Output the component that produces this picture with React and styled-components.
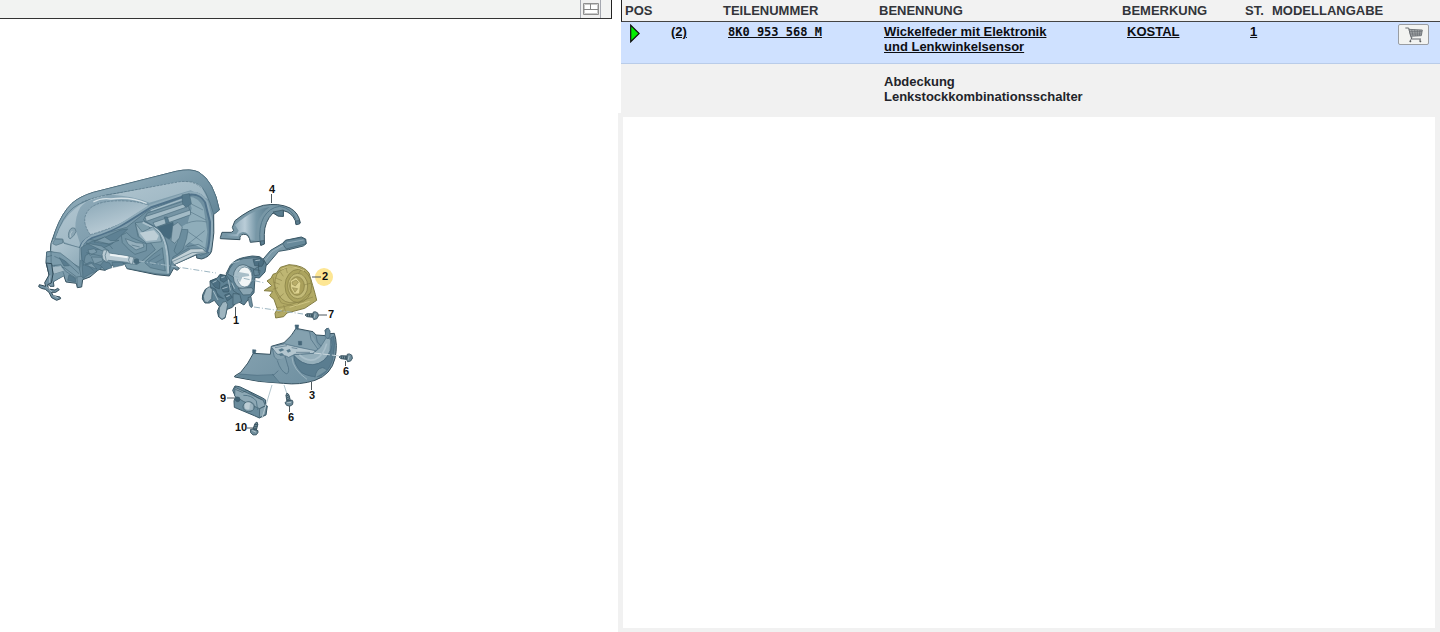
import React from 'react'
import styled, { createGlobalStyle } from 'styled-components'

const parts = [
  {
    pos: '(2)',
    number: '8K0 953 568 M',
    name: ['Wickelfeder mit Elektronik', 'und Lenkwinkelsensor'],
    remark: 'KOSTAL',
    count: '1',
    selected: true,
  },
  {
    name: ['Abdeckung', 'Lenkstockkombinationsschalter'],
  },
]

const labels = [
  { text: '4', x: 269, y: 193 },
  { text: '2', x: 322, y: 280 },
  { text: '7', x: 328, y: 318 },
  { text: '1', x: 233, y: 324 },
  { text: '6', x: 343, y: 375 },
  { text: '3', x: 309, y: 399 },
  { text: '9', x: 220, y: 402 },
  { text: '6', x: 288, y: 421 },
  { text: '10', x: 235, y: 431 },
]

function App() {
  return (
    <>
      <GlobalStyle />
      <Page>
        <DrawingPanel>
          <Toolbar>
            <LayoutButton type="button" aria-label="Layout">
              <LayoutIcon />
            </LayoutButton>
          </Toolbar>
          <DrawingArea>
            <Drawing />
          </DrawingArea>
        </DrawingPanel>

        <PartsPanel>
          <PartsTable>
            <colgroup>
              <Col $width="41px" />
              <Col $width="57px" />
              <Col $width="156px" />
              <Col $width="243px" />
              <Col $width="123px" />
              <Col $width="27px" />
              <Col />
              <Col $width="60px" />
            </colgroup>
            <thead>
              <tr>
                <HeadCell colSpan={2}>POS</HeadCell>
                <HeadCell>TEILENUMMER</HeadCell>
                <HeadCell>BENENNUNG</HeadCell>
                <HeadCell>BEMERKUNG</HeadCell>
                <HeadCell>ST.</HeadCell>
                <HeadCell colSpan={2}>MODELLANGABE</HeadCell>
              </tr>
            </thead>
            <tbody>
              {parts.map((part) => (
                <PartRow key={part.name[0]} part={part} />
              ))}
            </tbody>
          </PartsTable>
          <DetailFrame />
        </PartsPanel>
      </Page>
    </>
  )
}

function PartRow({ part }) {
  if (!part.selected) {
    return (
      <Row>
        <Cell colSpan={3} />
        <Cell>
          {part.name.map((line) => <Line key={line}>{line}</Line>)}
        </Cell>
        <Cell colSpan={4} />
      </Row>
    )
  }
  return (
    <Row $selected>
      <Cell><MarkerIcon /></Cell>
      <Cell><PartLink href="#pos">{part.pos}</PartLink></Cell>
      <Cell><NumberLink href="#number">{part.number}</NumberLink></Cell>
      <Cell>
        <PartLink href="#name">
          {part.name.map((line) => <Line key={line}>{line}</Line>)}
        </PartLink>
      </Cell>
      <Cell><PartLink href="#remark">{part.remark}</PartLink></Cell>
      <Cell><PartLink href="#count">{part.count}</PartLink></Cell>
      <Cell />
      <Cell $end>
        <CartButton type="button" aria-label="Warenkorb">
          <CartIcon />
        </CartButton>
      </Cell>
    </Row>
  )
}

function LayoutIcon() {
  return (
    <svg width="16" height="12" viewBox="0 0 16 12" fill="none">
      <path d="M.5 .5H15.500V11.500H.5Z" fill="#fff" stroke="#8f8f8f" />
      <path d="M1.500 1.500H14.500V10.500H1.500Z" stroke="#c9c9c9" />
      <path d="M1 6.500H15M7.500 1V6" stroke="#858585" />
    </svg>
  )
}

function MarkerIcon() {
  return (
    <Marker width="10" height="19" viewBox="0 0 10 19">
      <path d="M.7 1.200 9.200 9.500 .7 17.800Z" fill="#00f000" stroke="#111" strokeWidth="1.200" />
    </Marker>
  )
}

function CartIcon() {
  return (
    <svg width="18" height="16" viewBox="45 36 54 48" fill="none" stroke="#666b70">
      <path d="M46 39h10l9 33h28" strokeWidth="3" />
      <path d="M57 43l40 2-3 17-32 2Z" fill="#a5a9ab" strokeWidth="2.500" />
      <path d="M65 44l4 19M74 44l2 19M82 45v18M90 45l-2 17M58 50h38M60 57h35" strokeWidth="2" />
      <path d="M66 66l-5 12M90 72v6" strokeWidth="2.500" />
      <circle cx="61" cy="79" r="2.500" fill="#555" />
      <circle cx="91" cy="79" r="2.500" fill="#555" />
    </svg>
  )
}

function Drawing() {
  return (
    <DrawingSvg width="330" height="290" viewBox="36 160 330 290" role="img" aria-label="Lenkstockschalter">
      <defs>
        <linearGradient id="hood" x1="0" y1="0" x2="1" y2="1">
          <stop offset="0" stopColor="#a4bdca" />
          <stop offset=".5" stopColor="#7898a8" />
          <stop offset="1" stopColor="#567a8d" />
        </linearGradient>
        <linearGradient id="face" x1="0" y1="0" x2="1" y2="1">
          <stop offset="0" stopColor="#b7cad4" />
          <stop offset="1" stopColor="#8eabb9" />
        </linearGradient>
        <linearGradient id="glass" x1="0" y1="0" x2=".6" y2="1">
          <stop offset="0" stopColor="#8ba8b7" />
          <stop offset="1" stopColor="#c2d2db" />
        </linearGradient>
        <linearGradient id="steel" x1="0" y1="0" x2="1" y2="0">
          <stop offset="0" stopColor="#6f91a3" />
          <stop offset=".45" stopColor="#bacdd8" />
          <stop offset=".7" stopColor="#7798a8" />
          <stop offset="1" stopColor="#5b7c8e" />
        </linearGradient>
        <linearGradient id="shell" x1="0" y1="0" x2="1" y2="1">
          <stop offset="0" stopColor="#9ab4c2" />
          <stop offset="1" stopColor="#5f8294" />
        </linearGradient>
        <linearGradient id="panel" x1="0" y1="0" x2="1" y2=".6">
          <stop offset="0" stopColor="#88a4b2" />
          <stop offset="1" stopColor="#6f90a1" />
        </linearGradient>
      </defs>

      <Dashboard />
      <TopCover />
      <StalkSwitch />
      <ClockSpring />
      <LowerCover />
      <KneeSwitch />

      <g fill="none" stroke="#9db6c2" strokeWidth="1">
        <path d="M139 261 216 273M233 276 265 283M254 307 303 314" strokeDasharray="6 2 1 2" />
        <path d="M314 353 340 356" stroke="#c9d7dd" strokeDasharray="7 2" />
        <path d="M272 385 262 418M284 385 287 394" stroke="#b4c7cf" />
      </g>
      <Screw x={305} y={315} angle={4} />
      <Screw x={339} y={357} angle={5} />
      <Screw x={287} y={393} angle={78} />
      <Screw x={257} y={422} angle={107} />

      <circle cx="324" cy="277" r="9" fill="#fde694" />
      <path
        d="M271.500 194v9M312 277h9M318 315h9M235.500 307v9M345.500 361v5M311.500 382v8M227 398h7M289.500 406v6M247 428h6"
        stroke="#4d575c"
      />
      {labels.map((label) => (
        <PartLabel key={label.text + label.x} x={label.x} y={label.y}>{label.text}</PartLabel>
      ))}
    </DrawingSvg>
  )
}

function Dashboard() {
  return (
    <g transform="translate(30 160) scale(.33333)" stroke="#48697b" strokeWidth="1.800" strokeLinejoin="round">
      <path d="M63 250 76 213Q96 158 126 130 148 110 190 97L438 34Q483 24 507 37 552 64 568 150L551 163Q555 220 545 272 541 290 515 297L500 294 500 284 432 314 448 325 442 331 431 325 418 348 378 344 291 326 284 311 248 316 225 331 207 328 180 351 158 359 155 381 142 383 139 370 108 366 101 346 70 365 72 379 60 379 48 367 58 347 48 308 50 276 61 275Z" fill="url(#shell)" stroke="#36515f" strokeWidth="3" />
      {/* hood with its padded rim */}
      <path d="M76 235Q98 167 130 143 161 121 220 107L467 65Q510 64 527 98 542 129 551 163L568 150Q552 64 507 37 483 24 438 34L190 97Q148 110 126 130 96 158 76 213L65 250Z" fill="url(#hood)" />
      <path d="M76 236Q96 176 135 146 157 125 220 109L443 66Q492 59 514 80L533 117 482 91 358 128Q308 107 243 104 178 108 151 142 135 170 136 207L149 247 151 264Z" fill="url(#face)" stroke="none" />
      <path d="M155 127Q182 115 230 105L450 65Q490 61 512 82" fill="none" strokeDasharray="7 4" strokeWidth="1.500" />
      <path d="M181 224Q146 174 184 142 215 119 287 123 333 125 358 137 313 184 181 224Z" fill="url(#glass)" strokeWidth="1.500" strokeDasharray="8 3" />
      <path d="M190 126Q215 112 243 117 300 109 350 130" fill="none" stroke="#d5e1e6" strokeWidth="4" />
      <path d="M135 205Q121 199 116 219 113 237 122 236 134 226 138 215Z" fill="#8ba6b4" />
      <path d="M127 213Q118 222 122 232" fill="none" stroke="#bccfd7" strokeWidth="2" />
      {/* opening behind the instrument cluster */}
      <path d="M153 257Q155 244 188 230L290 202 351 154 475 103Q512 100 529 129L544 185Q546 249 534 278L512 286 475 265 429 291 416 337 378 334 293 315 279 306 231 319 185 331 160 354 148 344Z" fill="#6f90a1" />
      <path d="M150 285Q147 248 183 232 248 211 292 184L360 141 475 103Q510 95 527 125L541 183Q544 248 532 278" fill="none" stroke="#50728a" strokeWidth="10" />
      <path d="M151 300Q144 248 183 229 248 210 292 180L360 137 475 98Q512 93 531 125L546 185Q547 248 537 276" fill="none" stroke="#8fabb9" strokeWidth="6" />
      <path d="M475 110Q508 111 521 145L532 216 525 270 478 246 442 282 432 214 473 189 485 145Z" fill="#8fadba" stroke="none" />
      <path d="M480 130 519 150M480 155 528 180M470 190Q500 178 530 186M474 215 518 246M464 260 524 212" fill="none" strokeWidth="1.500" />
      <path d="M455 208 474 209 470 235 459 268 441 284 432 273Z" fill="#6b8d9e" />
      <path d="M340 180 352 159 459 124 474 132 482 163 377 202Z" fill="#7594a4" />
      <path d="M345 170 462 132 467 142 349 184ZM369 188 481 150 482 164 377 202Z" fill="#a3bbc6" />
      <path d="M403 171 412 171 418 188 408 191ZM456 105 478 101 484 131 469 142 458 132Z" fill="#567a8d" />
      <path d="M362 152 455 119" fill="none" stroke="#a7bec9" strokeWidth="4" />
      <path d="M383 202 429 187 432 216 418 238 398 226Z" fill="#466a7e" />
      <path d="M428 198 444 187 457 201 448 234 434 250 423 242Z" fill="#93adba" />
      <path d="M424 299 482 267 517 266 530 279 501 282 432 314Z" fill="#c1d0d6" />
      <path d="M429 304 487 278 526 276M470 260 505 253 527 266" fill="none" />
      {/* centre bracket */}
      <path d="M316 188 342 185 359 203 389 217 407 261 418 344 378 341 291 325 283 311 333 306 376 269 360 246 324 230Z" fill="#7e9eac" />
      <path d="M338 187 374 205Q406 220 412 291L415 340" fill="none" stroke="#a9c0cb" strokeWidth="6" />
      <path d="M342 184 376 201Q411 217 418 291L420 344" fill="none" strokeWidth="2" />
      <path d="M316 190 337 216 368 201 389 221 395 245 350 250 327 230Z" fill="#94afbc" />
      <path d="M329 218 372 211 386 227 380 240 348 243Z" fill="#bdced6" stroke="none" />
      <path d="M343 307Q369 282 397 263L406 333 361 323Z" fill="#6c8e9f" />
      <path d="M355 305 391 283M366 314 400 296" fill="none" strokeWidth="1.500" />
      <path d="M274 226 290 218 306 233 350 252 349 272 315 283 298 270 277 248Z" fill="#7495a5" />
      <path d="M286 236 319 248 339 250 342 261 318 270 294 252ZM305 255 329 261" fill="#95afbc" />
      {/* left end and column support */}
      <path d="M64 250 71 235 98 237 102 250 150 263 149 322 120 305 88 283 62 274Z" fill="url(#face)" />
      <path d="M68 251 74 238 98 239 98 249 78 256ZM61 275 91 279 122 303 148 326 153 349 140 351 104 324 73 316 68 342 98 333 103 347 70 365 58 347 49 309 50 276Z" fill="#7b9bab" />
      <path d="M63 275 64 343M50 291 66 286M64 317 93 314 107 334 139 355M73 289 108 305 147 341M141 351 142 382" fill="none" />
      <path d="M66 322 92 318 102 332 72 341Z" fill="#a5bbc6" stroke="none" />
      <path d="M88 293 104 302 118 317 102 318ZM117 344 136 355 137 366 113 361Z" fill="#597c8f" />
      <path d="M153 263 184 245 229 230 272 210 293 207 275 225 247 251 218 265 190 272 166 287 160 316 181 306 216 317 210 328 180 342 159 355Z" fill="#5e8194" />
      <path d="M168 249 214 258 236 272 220 274ZM192 246 224 231 242 242 267 241 236 252ZM174 270 193 266 201 276 180 286ZM184 291 215 292 219 302 193 312ZM166 316 185 310 201 327Z" fill="#7c9bab" />
      <path d="M180 238 236 252 248 267M169 278 221 290M156 300 191 332" fill="none" />
      <path d="M221 304 239 309 246 323 225 330 211 316ZM246 307 278 306 281 315 250 322Z" fill="#5f8295" />
      {/* steering column stub */}
      <path d="M220 270 232 270 238 279 299 289Q311 292 318 295L326 302 322 313 302 312 292 307 235 301 229 306 219 298Q213 283 220 270Z" fill="#b9cbd4" />
      <path d="M240 284 293 292" fill="none" stroke="#eef4f6" strokeWidth="6" />
      <path d="M231 270Q221 285 229 304M299 290Q291 300 301 311M311 293 307 312" fill="none" />
      <path d="M313 296 325 297 328 309 318 313 311 307Z" fill="#486a7b" />
      {/* foot */}
      <path d="M49 309 65 311 69 342 64 369 53 374 55 387 75 390 83 385 88 389 77 397 64 397 70 407 90 411 92 416 80 421 65 413 57 397 46 388 34 385 26 380 28 374 47 379 44 368 57 345Z" fill="#7090a1" stroke="#2f4957" strokeWidth="3" />
      <path d="M49 380 66 396M60 346 58 368M70 407 84 413" fill="none" stroke="#c0d0d8" strokeWidth="2" />
    </g>
  )
}

function TopCover() {
  return (
    <g transform="translate(190 175) scale(.33333)" stroke="#36515f" strokeWidth="2" strokeLinejoin="round">
      <path d="M91 188 96 172 124 172 131 167 127 157 135 137Q177 103 220 91 267 83 300 99 326 113 331 144L318 149 316 137Q305 112 280 107L280 124 264 123 249 114Q223 140 223 178L223 207 212 211 210 199 181 202Q177 175 160 178 148 180 150 194L91 191Z" fill="#7897a6" strokeWidth="3" />
      <path d="M135 150Q185 104 239 96 216 111 203 143 196 164 196 195L182 194Q176 170 158 171 143 175 145 184L104 184 107 177 139 178 146 167Z" fill="url(#steel)" stroke="none" />
      <path d="M210 200Q206 156 221 127 238 98 269 94 306 100 317 133" fill="none" stroke="#55788b" strokeWidth="3" />
      <path d="M249 111 280 105 280 124 264 123ZM211 198 223 197 223 207 213 211ZM316 138 329 137 329 147 319 149Z" fill="#5b7d8f" />
    </g>
  )
}

function StalkSwitch() {
  return (
    <g transform="translate(190 175) scale(.33333)" stroke="#3a5867" strokeWidth="2" strokeLinejoin="round">
      <path d="M217 255 242 226 278 205 286 196 334 186 347 192 349 206 340 213 296 224 266 229 231 270 216 269Z" fill="#7a99a8" strokeWidth="3" />
      <path d="M278 207 288 196 333 188 346 193 347 207 289 222Z" fill="#67899a" />
      <path d="M291 204 341 195M223 260 246 230 280 211" fill="none" stroke="#a3bac6" />
      <path d="M109 295 121 271Q136 252 164 247L187 243 209 245 221 254 229 268 225 291 208 309 195 307 192 353 179 368 162 390 142 378 127 397 111 403 105 429 96 433 86 426 82 409 88 395 73 376 58 384 45 384 37 372 38 359 46 343 61 336 60 318 82 309 90 298 109 302Z" fill="#5f8294" strokeWidth="3" />
      <path d="M113 297Q123 258 160 251L207 247 221 255 221 267 193 282Q164 266 144 280 130 292 132 307Z" fill="#7897a7" />
      <ellipse cx="159" cy="305" rx="29" ry="36" fill="#a9bfca" />
      <ellipse cx="164" cy="306" rx="22" ry="30" fill="#f1f5f6" stroke="#58798a" />
      <path d="M142 290 163 294 176 296 178 303 157 306 150 322 140 310Z" fill="#a9bec8" stroke="none" />
      <path d="M145 340 185 338 190 345 181 359 159 360Z" fill="#8ba6b3" />
      <path d="M40 364 48 342 58 335 67 344 65 371 53 383 43 380ZM88 399 98 382 108 379 113 389 106 426 96 433 87 425Z" fill="#9eb5c0" />
      <path d="M62 336 77 343 84 365 101 371M61 318 77 312 90 323 88 342 75 337ZM90 302 105 301 112 314 101 322 91 316ZM94 337 111 327 121 334 115 351 100 351ZM104 360 118 355 127 367 112 378ZM189 253 212 250 222 261 216 274 194 272Z" fill="#4c6f82" />
      <path d="M129 356 149 357 155 379 129 391ZM190 284 210 286 208 300 193 302Z" fill="#67899a" />
      <path d="M109 301 124 321 129 346 147 359M206 263 205 295" fill="none" />
      <path d="M68 323 80 317M94 308 104 305M97 341 113 336M109 365 119 361M126 265 149 257M196 257 210 255M125 323 134 341M70 348 84 375M115 314 121 346" fill="none" stroke="#a3bac5" strokeWidth="3" />
      <path d="M174 368 179 392 184 398 188 393 183 365Z" fill="#6e8d9d" />
    </g>
  )
}

function ClockSpring() {
  return (
    <g transform="translate(190 175) scale(.33333)" stroke="#837c42" strokeWidth="2" strokeLinejoin="round">
      <path d="M231 318 243 310 249 298 260 294 271 277 297 269Q342 271 357 294L368 331 376 359 380 376 344 400 291 414 281 425 257 429 255 415 262 402 252 373 239 362 248 349 222 347 245 332Z" fill="#b2aa65" strokeWidth="3" />
      <path d="M261 297Q281 273 318 276 350 282 357 319 361 366 316 383 281 388 265 358 246 333 261 297Z" fill="#beb673" />
      <ellipse cx="325" cy="333" rx="40" ry="50" fill="#aca45e" />
      <ellipse cx="323" cy="333" rx="30" ry="38" fill="#c2ba77" />
      <ellipse cx="321" cy="333" rx="22" ry="28" fill="#aaa05b" />
      <path d="M302 318 318 309 331 324 327 355 313 356 304 341Z" fill="#ddd391" stroke="none" />
      <path d="M306 321 318 315 325 322 316 333 307 328ZM307 338 323 341 315 352Z" fill="#b8ad68" strokeWidth="1.500" />
      <path d="M249 306 256 350 274 384 316 394 365 350M257 309 276 317M250 321 269 328M248 343 264 338M270 289 280 304M287 275 292 294M335 280 326 295M342 330 364 324M263 371 281 356M260 398 283 395 369 366M263 413 281 407M281 390 286 408" fill="none" strokeWidth="1.500" />
      <path d="M274 283Q304 266 342 287M266 408 278 402M299 397 359 379" fill="none" stroke="#cec584" strokeWidth="3" />
    </g>
  )
}

function LowerCover() {
  return (
    <g transform="translate(210 310) scale(.33333)" stroke="#44677a" strokeWidth="1.800" strokeLinejoin="round">
      <path d="M74 198 92 187Q116 160 130 130L181 133 184 109 222 98Q247 77 258 55L309 65 318 75 348 77 345 61 352 54 359 64 359 71 373 70Q384 104 375 145 364 194 315 211 269 226 220 220 148 218 74 201Z" fill="url(#panel)" stroke="#36515f" strokeWidth="3" />
      <path d="M77 199 91 192Q143 199 190 195L207 218Q143 216 77 199Z" fill="#668899" stroke="none" />
      <path d="M88 192Q143 199 192 194L205 182M187 192 209 218" fill="none" />
      <path d="M226 100 260 60 299 68 312 84 326 113 313 122 250 106Z" fill="#84a1af" stroke="none" />
      <path d="M299 66 303 88 324 118M318 76 322 96 335 110" fill="none" />
      {/* recess for the column */}
      <path d="M250 134 310 130 331 112 349 83 362 88 360 122Q346 160 309 165 274 164 250 134Z" fill="#95afbb" />
      <path d="M362 84Q370 102 360 127 344 160 309 164 275 165 252 137 251 163 275 188 303 204 332 198 366 178 371 130 376 100 371 78Z" fill="#5a7d90" />
      <path d="M268 134Q290 156 316 148 341 137 350 101" fill="none" stroke="#a9bfca" strokeWidth="5" />
      <path d="M184 110 224 102 257 110 316 122 310 130 254 133 236 142 228 138 211 140 193 127Z" fill="#b3c6cf" />
      <path d="M187 114 201 132 226 138 222 150 203 150 193 141Z" fill="#86a2b0" />
      <path d="M205 119 216 115 223 120 211 125ZM229 121 239 117 243 124 234 128ZM205 132 216 129 222 134 212 138Z" fill="#587b8d" stroke="none" />
      <path d="M195 113 231 107M245 113 262 116M258 127 300 127" fill="none" />
      <path d="M202 152Q212 184 230 192 241 185 232 163L226 141" fill="#7b9aa9" />
      <path d="M246 142Q248 178 291 208" fill="none" stroke="#9bb4c0" strokeWidth="3" />
      <path d="M315 203Q318 176 337 173 347 174 350 181" fill="#7897a5" />
      <path d="M128 119 138 120 136 131 128 130ZM255 45 266 45 264 58 257 56ZM265 94 275 94 275 105 266 105Z" fill="#456678" />
      <path d="M348 60 355 54 360 63 360 81 351 86 345 78Z" fill="#6c8d9e" />
    </g>
  )
}

function KneeSwitch() {
  return (
    <g transform="translate(210 310) scale(.33333)" stroke="#3a5867" strokeWidth="2" strokeLinejoin="round">
      <path d="M68 241 75 228 89 230 158 264 167 270 166 285 172 288 168 315 148 324 133 317 73 292 72 273 76 260Z" fill="#6a8c9d" strokeWidth="3" />
      <path d="M75 232 159 270 166 287 149 296 100 274 74 258Z" fill="#8da8b5" />
      <path d="M149 296 169 287 167 313 148 323Z" fill="#88a4b1" />
      <path d="M76 238 97 247 112 241 142 263 157 270" fill="none" />
      <circle cx="83" cy="268" r="7" fill="#3f6173" />
      <path d="M100 256Q125 255 139 273L143 300" fill="none" stroke="#557789" strokeWidth="3" />
      <ellipse cx="116" cy="290" rx="17" ry="15" fill="#7c9aa8" />
      <ellipse cx="114" cy="288" rx="11" ry="11" fill="#bccdd5" stroke="none" />
      <path d="M120 280 129 285 128 300 118 299Z" fill="#9cb3bf" stroke="none" />
    </g>
  )
}

// head sits at the far end of the thread
function Screw({ x, y, angle }) {
  return (
    <g transform={`translate(${x} ${y}) rotate(${angle})`} stroke="#304b59" strokeWidth=".8">
      <path d="M0 0 2-1.500 8-1.800V1.800L2 1.500Z" fill="#78919c" />
      <path d="M2-1.500 3 1.500M4-1.600 5 1.600M6-1.700 7 1.700" fill="none" />
      <path d="M8-3.500 10-4 12.500-3 13.500 0 12 3 9 4 8 2Z" fill="#6f8d9b" />
      <path d="M10-2 9.500 2" stroke="#b9cad1" />
    </g>
  )
}

const GlobalStyle = createGlobalStyle`
  * {
    box-sizing: border-box;
  }
  body {
    margin: 0;
    background: #fff;
    font-family: "Liberation Sans", Arial, sans-serif;
    font-size: 13px;
    line-height: 15px;
    font-weight: bold;
    color: #22242a;
  }
`

const Page = styled.div`
  display: flex;
  gap: 6px;
  min-height: 100vh;
`

const DrawingPanel = styled.section`
  flex: 0 0 42.5%;
`

const Toolbar = styled.div`
  display: flex;
  justify-content: flex-end;
  height: 19px;
  padding-right: 10px;
  background: #f2f3f2;
  border-right: 1px solid #222;
  border-bottom: 1px solid #333;
`

const LayoutButton = styled.button`
  display: flex;
  align-items: center;
  justify-content: center;
  width: 21px;
  height: 18px;
  padding: 0;
  background: #f0f0f0;
  border: solid #a5a8b0;
  border-width: 0 1px;
`

const DrawingArea = styled.div`
  padding: 141px 0 0 36px;
`

const DrawingSvg = styled.svg`
  display: block;
`

const PartLabel = styled.text`
  font-size: 11px;
  fill: #111;
`

const PartsPanel = styled.section`
  flex: 1;
  display: flex;
  flex-direction: column;
  min-width: 0;
`

const PartsTable = styled.table`
  margin-left: 3px;
  table-layout: fixed;
  border-collapse: separate;
  border-spacing: 0;
  background: #f1f1f1;
`

const Col = styled.col`
  width: ${(props) => props.$width || 'auto'};
`

const HeadCell = styled.th`
  height: 22px;
  padding: 0 0 1px 4px;
  text-align: left;
  white-space: nowrap;
  color: #33353a;
  background: #f2f2f2;
  border-bottom: 1px solid #444;

  &:first-child {
    border-left: 1px solid #222;
    padding-left: 3px;
  }
`

const Cell = styled.td`
  padding: 10px 0 0 9px;
  vertical-align: top;
  white-space: nowrap;
  text-align: ${(props) => (props.$end ? 'right' : 'left')};
`

const Row = styled.tr`
  height: ${(props) => (props.$selected ? 42 : 49)}px;
  background: ${(props) => (props.$selected ? '#cfe1ff' : '#f1f1f1')};

  ${Cell} {
    ${(props) => props.$selected && `
      padding-top: 2px;
      border-bottom: 1px solid #b9cce9;
    `}
  }
`

const Line = styled.span`
  display: block;
`

const PartLink = styled.a`
  color: #0c0e12;
  text-decoration: underline;
`

const NumberLink = styled(PartLink)`
  font-family: "DejaVu Sans Mono", monospace;
  font-size: 12px;
`

const Marker = styled.svg`
  display: block;
`

const CartButton = styled.button`
  display: inline-flex;
  align-items: center;
  justify-content: center;
  width: 31px;
  height: 21px;
  margin-right: 11px;
  padding: 0;
  vertical-align: top;
  background: #f2f3f1;
  border: 1px solid #999da3;
  border-radius: 2px;
`

const DetailFrame = styled.div`
  flex: 1;
  background: #fff;
  border: solid #f1f1f1;
  border-width: 4px 5px;
`

export default App
